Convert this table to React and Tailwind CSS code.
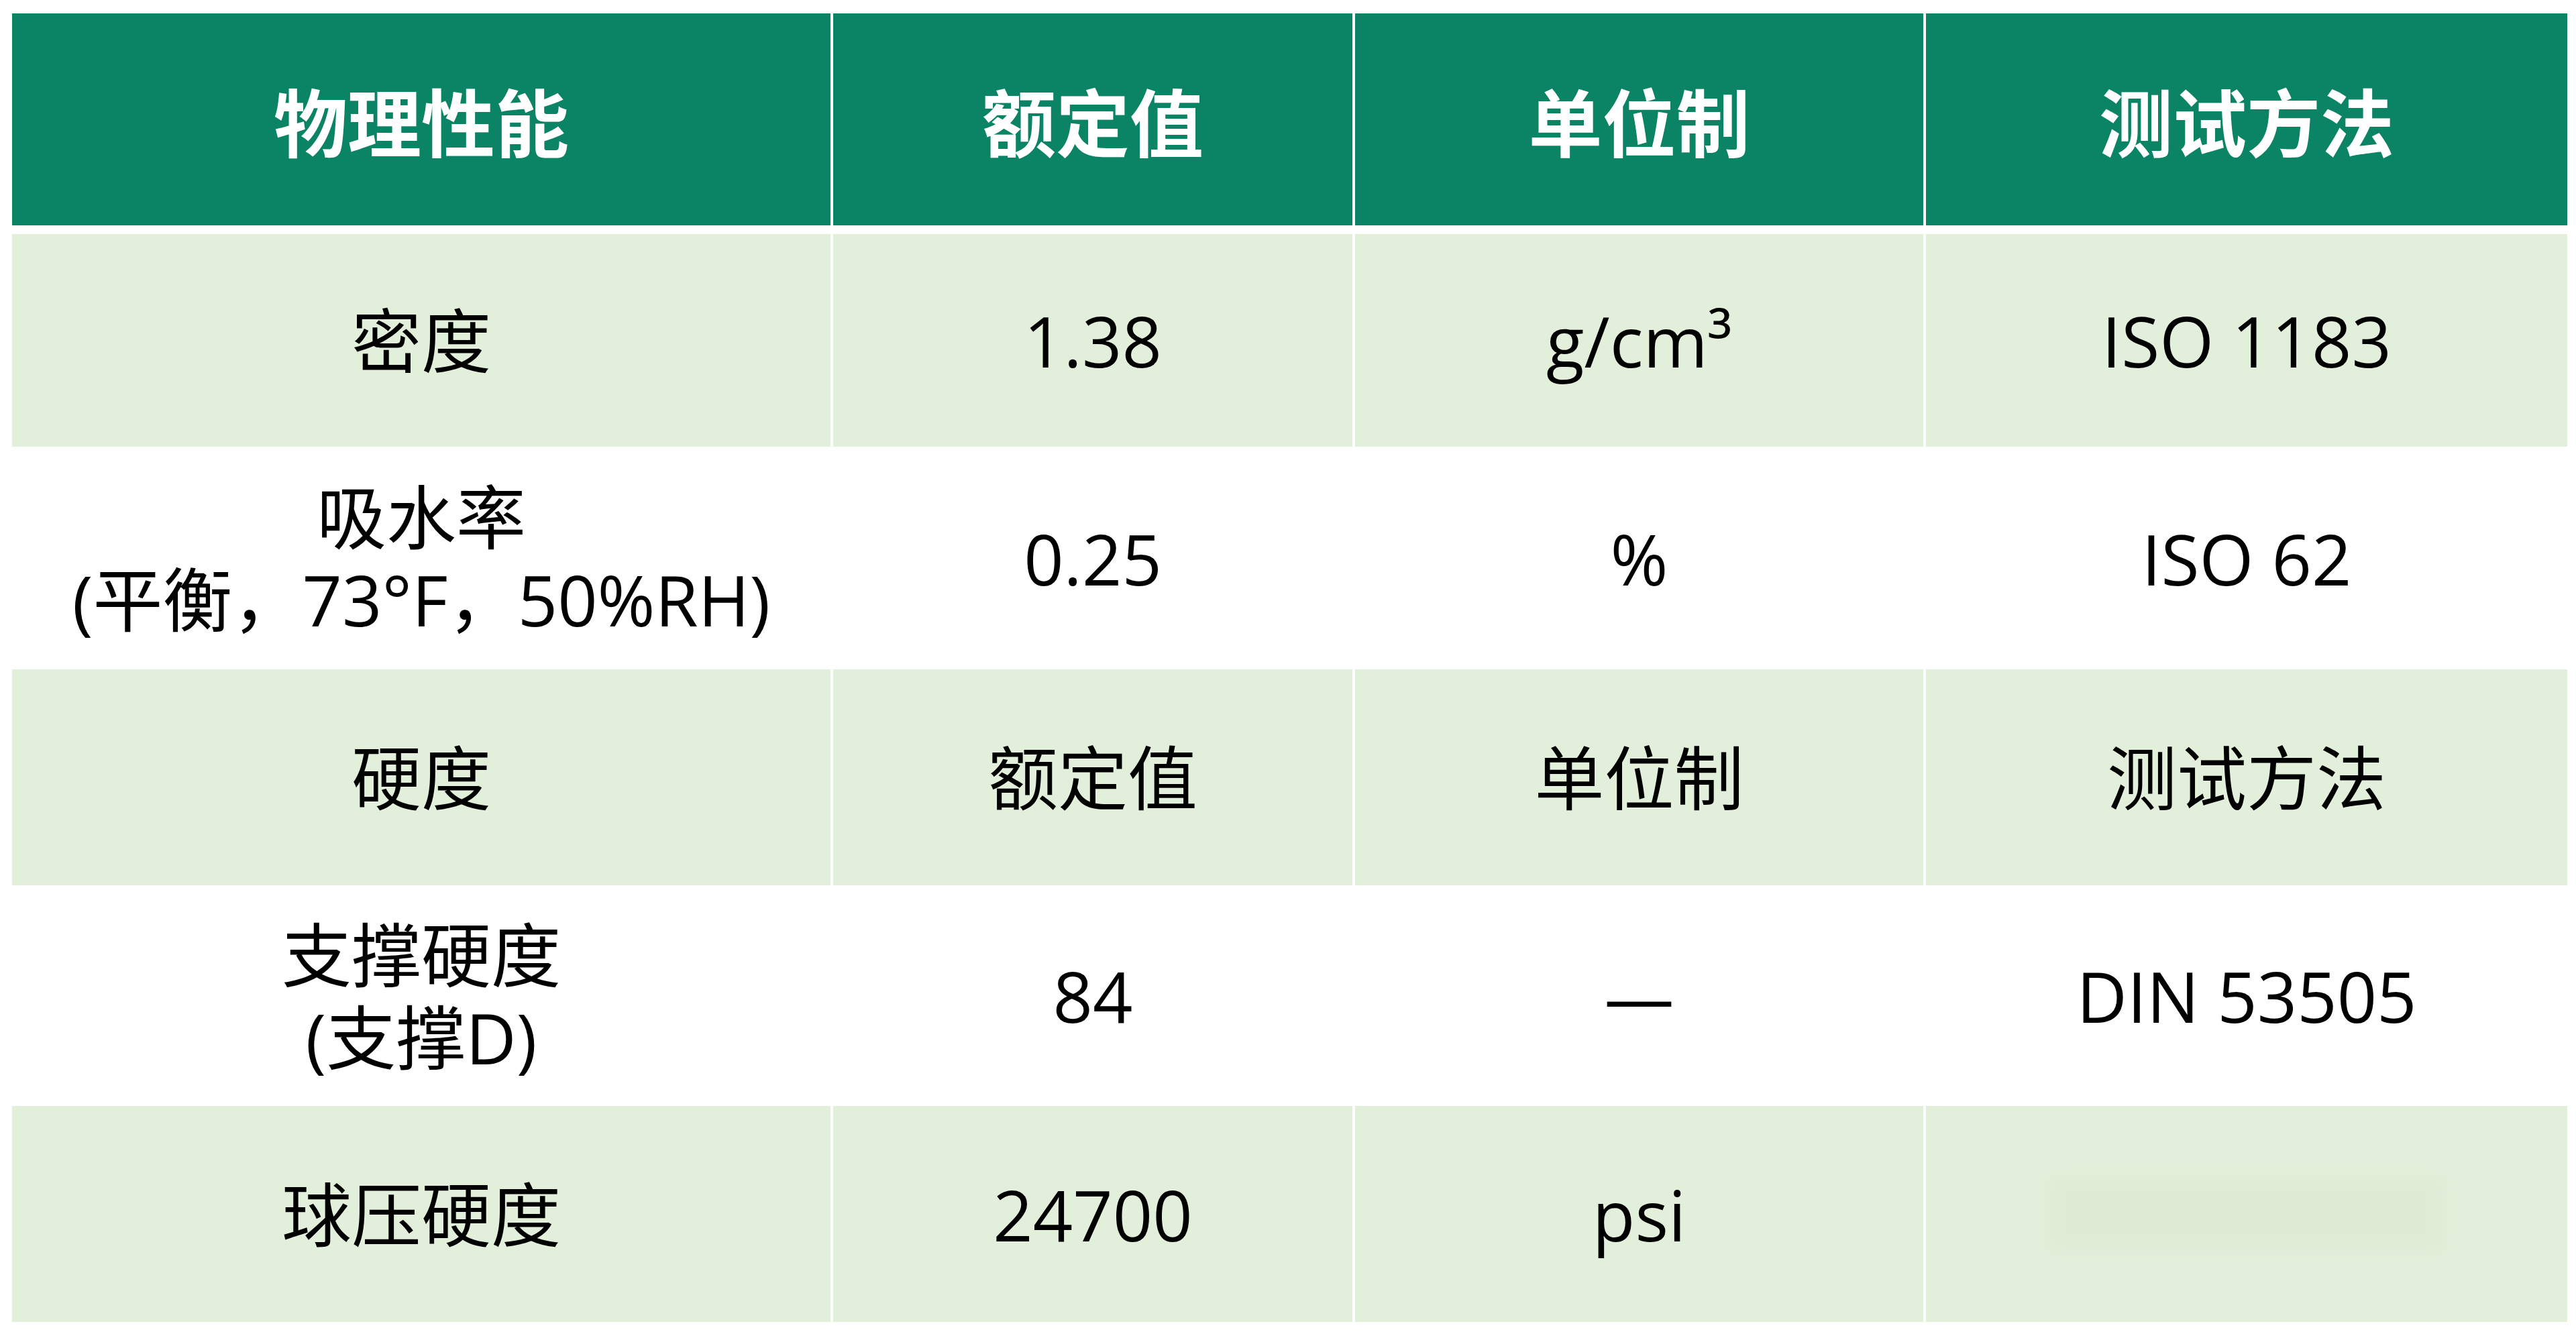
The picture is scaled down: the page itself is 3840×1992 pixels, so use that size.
import React from 'react'

const cols = 'grid grid-cols-[1220px_774px_847px_956px] gap-x-[4px]'

const rows = [
    { h: 'h-[317px]', bg: 'bg-[#e2efda]', cells: [['密度'], ['1.38'], ['g/cm³'], ['ISO 1183']] },
    { h: 'h-[332px]', bg: 'bg-white', cells: [['吸水率', '(平衡，73°F，50%RH)'], ['0.25'], ['%'], ['ISO 62']] },
    { h: 'h-[322px]', bg: 'bg-[#e2efda]', cells: [['硬度'], ['额定值'], ['单位制'], ['测试方法']] },
    { h: 'h-[329px]', bg: 'bg-white', cells: [['支撑硬度', '(支撑D)'], ['84'], ['—'], ['DIN 53505']] },
    { h: 'h-[322px]', bg: 'bg-[#e2efda]', cells: [['球压硬度'], ['24700'], ['psi'], null] },
]

function Cell({ lines, bg }) {
    return (
        <div className={`${bg} flex items-center justify-center text-center`}>
            {lines ? (
                <p className="leading-[123px] whitespace-nowrap">
                    {lines.map((line, i) => (
                        <React.Fragment key={i}>
                            {i > 0 && <br />}
                            {line}
                        </React.Fragment>
                    ))}
                </p>
            ) : (
                // faint smudge where the test method was removed
                <div className="w-[594px] h-[114px] bg-[#dceAd4] blur-[10px] opacity-50" />
            )}
        </div>
    )
}

export default function App() {
    const headers = ['物理性能', '额定值', '单位制', '测试方法']

    return (
        <div className="min-h-screen bg-white pl-[18px] pt-[20px] font-['Open_Sans','Noto_Sans_CJK_SC',sans-serif] text-[104px] text-black">
            <div className="w-[3809px]">
                <div className={`${cols} h-[316px]`}>
                    {headers.map(h => (
                        <div key={h} className="bg-[#0b8365] flex items-center justify-center">
                            <span className="font-['Noto_Sans_CJK_SC',sans-serif] font-bold text-[110px] text-white">{h}</span>
                        </div>
                    ))}
                </div>

                <div className="mt-[13px]">
                    {rows.map((row, i) => (
                        <div key={i} className={`${cols} ${row.h}`}>
                            {row.cells.map((c, j) => <Cell key={j} lines={c} bg={row.bg} />)}
                        </div>
                    ))}
                </div>
            </div>
        </div>
    )
}
